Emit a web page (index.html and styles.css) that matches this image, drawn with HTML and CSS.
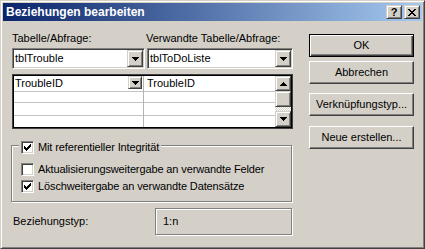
FILE: index.html
```html
<!DOCTYPE html>
<html>
<head>
<meta charset="utf-8">
<link rel="stylesheet" href="styles.css">
</head>
<body>
<div class="window">
  <div class="titlebar">
    <span class="title">Beziehungen bearbeiten</span>
    <div class="tbtns">
      <span class="tbtn help">?</span>
      <span class="tbtn"><svg width="8" height="7" viewBox="0 0 8 7" shape-rendering="crispEdges"><path d="M0 0h2v1h-2zM6 0h2v1h-2zM1 1h2v1h-2zM5 1h2v1h-2zM2 2h4v1h-4zM3 3h2v1h-2zM2 4h4v1h-4zM1 5h2v1h-2zM5 5h2v1h-2zM0 6h2v1h-2zM6 6h2v1h-2z" fill="#000"/></svg></span>
    </div>
  </div>
  <div class="main">
    <div class="left">
      <div class="labels">
        <span class="lab1">Tabelle/Abfrage:</span>
        <span>Verwandte Tabelle/Abfrage:</span>
      </div>
      <div class="combos">
        <div class="combo c1">
          <span class="val">tblTrouble</span>
          <span class="dd"><svg width="7" height="4" viewBox="0 0 7 4" shape-rendering="crispEdges"><path d="M0 0h7v1h-1v1h-1v1h-1v1h-1v-1h-1v-1h-1v-1h-1z" fill="#000"/></svg></span>
        </div>
        <div class="combo c2">
          <span class="val">tblToDoListe</span>
          <span class="dd"><svg width="7" height="4" viewBox="0 0 7 4" shape-rendering="crispEdges"><path d="M0 0h7v1h-1v1h-1v1h-1v1h-1v-1h-1v-1h-1v-1h-1z" fill="#000"/></svg></span>
        </div>
      </div>
      <div class="grid">
        <div class="col col1">
          <div class="cell r1">
            <span class="ctext">TroubleID</span>
            <span class="dd small"><svg width="7" height="4" viewBox="0 0 7 4" shape-rendering="crispEdges"><path d="M0 0h7v1h-1v1h-1v1h-1v1h-1v-1h-1v-1h-1v-1h-1z" fill="#000"/></svg></span>
          </div>
          <div class="cell r2"></div>
          <div class="cell r3"></div>
          <div class="cell r4"></div>
        </div>
        <div class="col col2">
          <div class="cell r1"><span class="ctext c2t">TroubleID</span></div>
          <div class="cell r2"></div>
          <div class="cell r3"></div>
          <div class="cell r4"></div>
        </div>
        <div class="sb">
          <span class="sbbtn up"><svg width="7" height="4" viewBox="0 0 7 4" shape-rendering="crispEdges"><path d="M0 4h7v-1h-1v-1h-1v-1h-1v-1h-1v1h-1v1h-1v1h-1z" fill="#000"/></svg></span>
          <span class="sbbtn thumb"></span>
          <span class="track"></span>
          <span class="sbbtn down"><svg width="7" height="4" viewBox="0 0 7 4" shape-rendering="crispEdges"><path d="M0 0h7v1h-1v1h-1v1h-1v1h-1v-1h-1v-1h-1v-1h-1z" fill="#000"/></svg></span>
        </div>
      </div>
      <div class="group">
        <div class="legend">
          <span class="chk"><svg width="7" height="7" viewBox="0 0 7 7" shape-rendering="crispEdges"><path d="M0 2h1v3h-1zM1 3h1v3h-1zM2 4h1v3h-1zM3 3h1v3h-1zM4 2h1v3h-1zM5 1h1v3h-1zM6 0h1v3h-1z" fill="#000"/></svg></span>
          <span>Mit referentieller Integrität</span>
        </div>
        <div class="row">
          <span class="chk"></span>
          <span>Aktualisierungsweitergabe an verwandte Felder</span>
        </div>
        <div class="row">
          <span class="chk"><svg width="7" height="7" viewBox="0 0 7 7" shape-rendering="crispEdges"><path d="M0 2h1v3h-1zM1 3h1v3h-1zM2 4h1v3h-1zM3 3h1v3h-1zM4 2h1v3h-1zM5 1h1v3h-1zM6 0h1v3h-1z" fill="#000"/></svg></span>
          <span>Löschweitergabe an verwandte Datensätze</span>
        </div>
      </div>
      <div class="typrow">
        <span class="typlab">Beziehungstyp:</span>
        <div class="typbox">1:n</div>
      </div>
    </div>
    <div class="right">
      <div class="btn def">OK</div>
      <div class="btn b2">Abbrechen</div>
      <div class="btn b3">Verknüpfungstyp...</div>
      <div class="btn b4">Neue erstellen...</div>
    </div>
  </div>
</div>
</body>
</html>
```
FILE: styles.css
```css
* { box-sizing: border-box; }
html, body { margin: 0; padding: 0; }
body {
  background: #d4d0c8;
  font: 11px/13px "Liberation Sans", Arial, sans-serif;
  color: #000;
}
.window {
  width: 425px;
  height: 249px;
  background: #d4d0c8;
  border: 1px solid;
  border-color: #d4d0c8 #404040 #404040 #d4d0c8;
  box-shadow: inset 1px 1px #fff, inset -1px -1px #808080;
  padding: 2px;
}
.titlebar {
  height: 18px;
  background: linear-gradient(to right, #0a246a, #a6caf0);
  display: flex;
  align-items: center;
  padding: 0 2px;
  color: #fff;
  font-weight: bold;
}
.title { flex: 1; padding-left: 1px; font-size: 12px; }
.tbtns { display: flex; gap: 2px; }
.tbtn, .dd, .sbbtn {
  background: #d4d0c8;
  border: 1px solid;
  border-color: #d4d0c8 #404040 #404040 #d4d0c8;
  box-shadow: inset 1px 1px #fff, inset -1px -1px #808080;
  display: flex;
  align-items: center;
  justify-content: center;
}
.tbtn { width: 16px; height: 14px; color: #000; }
.tbtn.help { font-size: 11px; line-height: 12px; }
.main { display: flex; padding: 11px 0 0 9px; }
.left { width: 281px; }
.right {
  width: 105px;
  margin-left: 16px;
  padding-top: 2px;
  display: flex;
  flex-direction: column;
}
.labels { display: flex; height: 13px; }
.lab1 { width: 134px; }
.combos { display: flex; gap: 2px; margin-top: 3px; }
.combo {
  height: 21px;
  border: 1px solid;
  border-color: #808080 #fff #fff #808080;
  box-shadow: inset 1px 1px #404040, inset -1px -1px #d4d0c8;
  background: #fff;
  padding: 1px;
  display: flex;
  align-items: center;
}
.c1 { width: 133px; }
.c2 { width: 146px; }
.val { flex: 1; padding-left: 1px; }
.dd { width: 16px; height: 17px; }
.dd.small { width: 14px; height: 13px; margin-right: 1px; }
.grid {
  margin-top: 5px;
  height: 55px;
  border: 1px solid #404040;
  padding: 1px;
  box-shadow: inset 0 0 0 1px #000;
  background: #fff;
  display: flex;
}
.col { display: flex; flex-direction: column; }
.col1 { width: 129px; }
.col2 { width: 132px; border-left: 1px solid #b4b4b4; }
.cell { border-bottom: 1px solid #c4c4c4; display: flex; align-items: flex-start; }
.r1 { height: 16px; }
.r2 { height: 11px; }
.r3 { height: 13px; }
.r4 { height: 11px; border-bottom: 0; }
.ctext { flex: 1; padding-left: 1px; line-height: 15px; }
.c2t { padding-left: 3px; }
.sb { width: 16px; display: flex; flex-direction: column; }
.sbbtn.up { height: 15px; }
.sbbtn.thumb { height: 16px; }
.sbbtn.down { height: 16px; }
.track {
  height: 4px;
  background: repeating-conic-gradient(#fff 0 25%, #d4d0c8 0 50%) 0 0 / 2px 2px;
}
.group {
  position: relative;
  margin-top: 16px;
  margin-left: -1px;
  width: 281px;
  height: 57px;
  border: 1px solid #808080;
  box-shadow: inset 1px 1px #fff, 1px 1px #fff;
  padding: 17px 0 0 9px;
  display: flex;
  flex-direction: column;
  gap: 4px;
  letter-spacing: -0.12px;
}
.legend {
  position: absolute;
  top: -5px;
  left: 7px;
  padding: 0 2px;
  background: #d4d0c8;
  display: flex;
  align-items: center;
  gap: 4px;
}
.row { display: flex; align-items: center; gap: 4px; height: 13px; }
.chk {
  width: 13px;
  height: 13px;
  background: #fff;
  border: 1px solid;
  border-color: #808080 #fff #fff #808080;
  box-shadow: inset 1px 1px #404040, inset -1px -1px #d4d0c8;
  display: flex;
  align-items: center;
  justify-content: center;
}
.typrow { display: flex; align-items: center; margin-top: 6px; }
.typlab { width: 143px; padding-left: 1px; }
.typbox {
  width: 137px;
  height: 27px;
  border: 1px solid #808080;
  box-shadow: inset 1px 1px #fff, 1px 1px #fff;
  padding-left: 7px;
  display: flex;
  align-items: center;
}
.btn {
  width: 105px;
  height: 23px;
  border: 1px solid;
  border-color: #fff #404040 #404040 #fff;
  box-shadow: inset -1px -1px #808080;
  display: flex;
  align-items: center;
  justify-content: center;
}
.btn.def {
  border-color: #000;
  box-shadow: inset 1px 1px #fff, inset -1px -1px #404040, inset -2px -2px #808080;
}
.b2 { margin-top: 4px; }
.b3 { margin-top: 9px; }
.b4 { margin-top: 10px; }
```
